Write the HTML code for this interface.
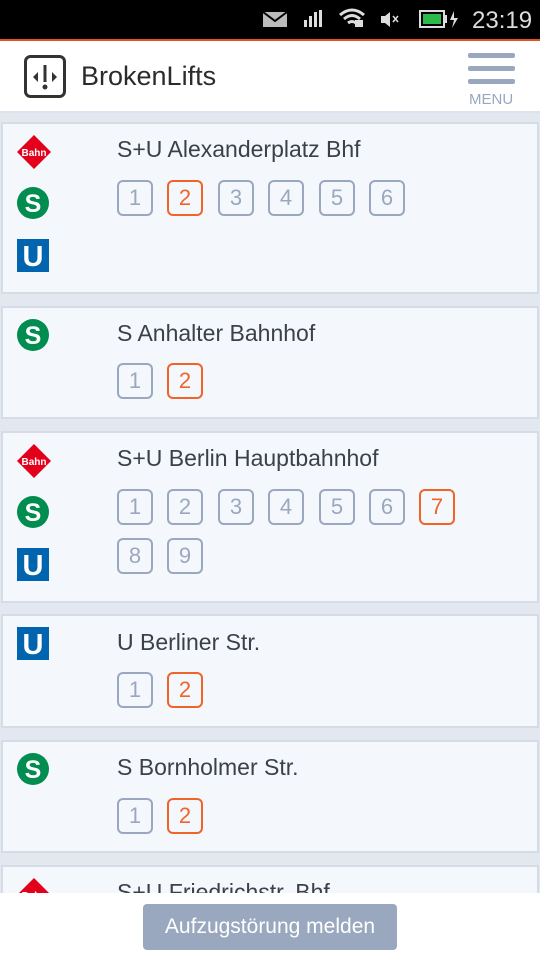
<!DOCTYPE html>
<html style="overflow:hidden;width:540px;height:960px"><head><meta charset="utf-8"><style>
*{margin:0;padding:0;box-sizing:border-box}
body{width:540px;height:960px;overflow:hidden;background:#e3e8f0;font-family:"Liberation Sans",sans-serif;position:relative}
.sb{position:absolute;top:0;left:0;width:540px;height:39px;background:#000;color:#ddd}
.ol{position:absolute;top:39px;left:0;width:540px;height:2px;background:#e0531c}
.hd{position:absolute;top:41px;left:0;width:540px;height:72px;background:#fff;border-bottom:2px solid #dde3ec}
.card{position:absolute;left:1px;width:538px;background:#f4f7fc;border:2px solid #d6dce5}
.ic{position:absolute;left:13px}
.t{position:absolute;left:114px;font-size:23px;color:#3b4049;white-space:nowrap}
.b{position:absolute;width:36px;height:36px;border:2.5px solid #9aa8bf;border-radius:6px;color:#9aa8bf;font-size:22px;text-align:center;line-height:31px}
.b.o{border-color:#f0642a;color:#f0642a}
.ft{position:absolute;top:893px;left:0;width:540px;height:67px;background:#fff}
.btn{position:absolute;left:143px;top:904px;width:254px;height:46px;background:#9aa8bf;border-radius:4px;color:#fff;font-size:21px;text-align:center;line-height:46px}
</style></head><body>
<div class="sb">
<svg width="540" height="39" style="position:absolute;left:0;top:0">
<rect x="263" y="12" width="24" height="15" fill="#bbb"/><path d="M263 12 L275 21 L287 12" stroke="#000" stroke-width="2" fill="none"/>
<rect x="304" y="20" width="3" height="7" fill="#ddd"/><rect x="309" y="16" width="3" height="11" fill="#ddd"/><rect x="314" y="12" width="3" height="15" fill="#ddd"/><rect x="319" y="10" width="3" height="17" fill="#ddd"/>
<path d="M340 15 Q352 5 364 15 M344 19 Q352 12 360 19 M348 23 Q352 20 356 23" stroke="#ddd" stroke-width="3" fill="none"/><rect x="355" y="20" width="8" height="7" fill="#ddd"/>
<path d="M381 16 h4 l5-4 v15 l-5-4 h-4z" fill="#ddd"/><path d="M393 16 l5 6 M398 16 l-5 6" stroke="#ddd" stroke-width="1.5"/>
<rect x="420" y="11" width="24" height="16" fill="none" stroke="#ddd" stroke-width="2"/><rect x="423" y="14" width="18" height="10" fill="#2db84a"/><rect x="444" y="15" width="3" height="8" fill="#ddd"/>
<path d="M454 11 l-4 9 h4 l-2 8 l6-10 h-4z" fill="#ddd"/>
<text x="472" y="28" font-size="24" fill="#ddd" font-family="Liberation Sans">23:19</text>
</svg></div>
<div class="ol"></div>
<div class="hd">
<svg width="44" height="44" style="position:absolute;left:24px;top:14px"><rect x="1.5" y="1.5" width="39" height="40" rx="5" fill="none" stroke="#333" stroke-width="3"/><path d="M14 17 l-5 5 l5 5z M28 17 l5 5 l-5 5z" fill="#333"/><rect x="19.5" y="10" width="3" height="17" fill="#333"/><circle cx="21" cy="32" r="2.5" fill="#333"/></svg>
<div style="position:absolute;left:81px;top:20px;font-size:27px;color:#2b2b2b">BrokenLifts</div>
<div style="position:absolute;left:468px;top:12px;width:47px;height:5px;background:#9aa8bf;border-radius:2px"></div>
<div style="position:absolute;left:468px;top:25px;width:47px;height:5px;background:#9aa8bf;border-radius:2px"></div>
<div style="position:absolute;left:468px;top:38px;width:47px;height:5px;background:#9aa8bf;border-radius:2px"></div>
<div style="position:absolute;left:469px;top:50px;font-size:15px;color:#9aa8bf">MENU</div>
</div>

<div class="card" style="top:122px;height:172px">
<svg class="ic" style="top:10px" width="36" height="36"><path d="M18 1 L35 18 L18 35 L1 18Z" fill="#e2001a"/><text x="18" y="22" font-size="10" font-weight="bold" fill="#fff" text-anchor="middle" font-family="Liberation Sans">Bahn</text></svg>
<svg class="ic" style="top:62px" width="36" height="36"><circle cx="17" cy="17" r="16" fill="#008d4f"/><text x="17" y="26" font-size="25" font-weight="bold" fill="#fff" text-anchor="middle" font-family="Liberation Sans">S</text></svg>
<svg class="ic" style="top:114px" width="36" height="36"><rect x="1" y="1" width="32" height="33" fill="#0065ae"/><text x="17" y="28" font-size="29" font-weight="bold" fill="#fff" text-anchor="middle" font-family="Liberation Sans">U</text></svg>
<div class="t" style="top:12px">S+U Alexanderplatz Bhf</div>
<div class="b" style="left:114px;top:56px">1</div><div class="b o" style="left:164px;top:56px">2</div><div class="b" style="left:215px;top:56px">3</div><div class="b" style="left:265px;top:56px">4</div><div class="b" style="left:316px;top:56px">5</div><div class="b" style="left:366px;top:56px">6</div>
</div>

<div class="card" style="top:306px;height:113px">
<svg class="ic" style="top:10px" width="36" height="36"><circle cx="17" cy="17" r="16" fill="#008d4f"/><text x="17" y="26" font-size="25" font-weight="bold" fill="#fff" text-anchor="middle" font-family="Liberation Sans">S</text></svg>
<div class="t" style="top:12px">S Anhalter Bahnhof</div>
<div class="b" style="left:114px;top:55px">1</div><div class="b o" style="left:164px;top:55px">2</div>
</div>

<div class="card" style="top:431px;height:172px">
<svg class="ic" style="top:10px" width="36" height="36"><path d="M18 1 L35 18 L18 35 L1 18Z" fill="#e2001a"/><text x="18" y="22" font-size="10" font-weight="bold" fill="#fff" text-anchor="middle" font-family="Liberation Sans">Bahn</text></svg>
<svg class="ic" style="top:62px" width="36" height="36"><circle cx="17" cy="17" r="16" fill="#008d4f"/><text x="17" y="26" font-size="25" font-weight="bold" fill="#fff" text-anchor="middle" font-family="Liberation Sans">S</text></svg>
<svg class="ic" style="top:114px" width="36" height="36"><rect x="1" y="1" width="32" height="33" fill="#0065ae"/><text x="17" y="28" font-size="29" font-weight="bold" fill="#fff" text-anchor="middle" font-family="Liberation Sans">U</text></svg>
<div class="t" style="top:12px">S+U Berlin Hauptbahnhof</div>
<div class="b" style="left:114px;top:56px">1</div><div class="b" style="left:164px;top:56px">2</div><div class="b" style="left:215px;top:56px">3</div><div class="b" style="left:265px;top:56px">4</div><div class="b" style="left:316px;top:56px">5</div><div class="b" style="left:366px;top:56px">6</div><div class="b o" style="left:416px;top:56px">7</div>
<div class="b" style="left:114px;top:105px">8</div><div class="b" style="left:164px;top:105px">9</div>
</div>

<div class="card" style="top:614px;height:114px">
<svg class="ic" style="top:10px" width="36" height="36"><rect x="1" y="1" width="32" height="33" fill="#0065ae"/><text x="17" y="28" font-size="29" font-weight="bold" fill="#fff" text-anchor="middle" font-family="Liberation Sans">U</text></svg>
<div class="t" style="top:13px">U Berliner Str.</div>
<div class="b" style="left:114px;top:56px">1</div><div class="b o" style="left:164px;top:56px">2</div>
</div>

<div class="card" style="top:740px;height:113px">
<svg class="ic" style="top:10px" width="36" height="36"><circle cx="17" cy="17" r="16" fill="#008d4f"/><text x="17" y="26" font-size="25" font-weight="bold" fill="#fff" text-anchor="middle" font-family="Liberation Sans">S</text></svg>
<div class="t" style="top:12px">S Bornholmer Str.</div>
<div class="b" style="left:114px;top:56px">1</div><div class="b o" style="left:164px;top:56px">2</div>
</div>

<div class="card" style="top:865px;height:95px;border-bottom:none">
<svg class="ic" style="top:10px" width="36" height="36"><path d="M18 1 L35 18 L18 35 L1 18Z" fill="#e2001a"/><text x="18" y="22" font-size="10" font-weight="bold" fill="#fff" text-anchor="middle" font-family="Liberation Sans">Bahn</text></svg>
<div class="t" style="top:12px">S+U Friedrichstr. Bhf</div>
</div>

<div class="ft"></div>
<div class="btn">Aufzugstörung melden</div>
</body></html>
